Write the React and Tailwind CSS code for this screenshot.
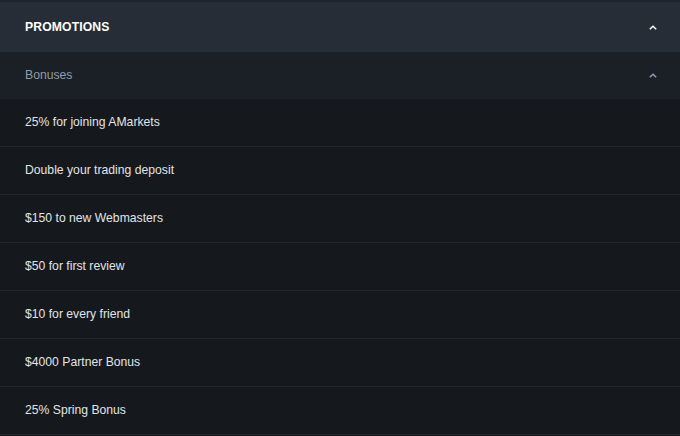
import React from "react";

const items = [
  "25% for joining AMarkets",
  "Double your trading deposit",
  "$150 to new Webmasters",
  "$50 for first review",
  "$10 for every friend",
  "$4000 Partner Bonus",
  "25% Spring Bonus",
];

function Caret({ className }) {
  return (
    <svg width="8" height="5" viewBox="0 0 8 5" className={className} fill="none">
      <path d="M0.8 4.3 L4 1.2 L7.2 4.3" stroke="currentColor" strokeWidth="1.5" />
    </svg>
  );
}

export default function App() {
  return (
    <div
      className="w-[680px] h-[436px] overflow-hidden bg-[#15191d]"
      style={{ fontFamily: '"Liberation Sans", Arial, sans-serif' }}
    >
      <div className="h-[52px] border-t-2 border-[#1d232a] bg-[#262d36] flex items-center justify-between pl-[25px] pr-[23px]">
        <span className="text-[12.2px] font-bold text-white tracking-[0.01em]">PROMOTIONS</span>
        <Caret className="text-white" />
      </div>
      <div className="h-[47px] bg-[#1b1f26] flex items-center justify-between pl-[25px] pr-[23px] pb-[1px]">
        <span className="text-[12.2px] text-[#909ca7]">Bonuses</span>
        <Caret className="text-[#909ca7]" />
      </div>
      {items.map((t) => (
        <div
          key={t}
          className="h-[48px] border-b border-[#23282e] flex items-center pl-[25px] pb-[1px] bg-[#15191d]"
        >
          <span className="text-[12.2px] text-[#e1e4e7]">{t}</span>
        </div>
      ))}
    </div>
  );
}
